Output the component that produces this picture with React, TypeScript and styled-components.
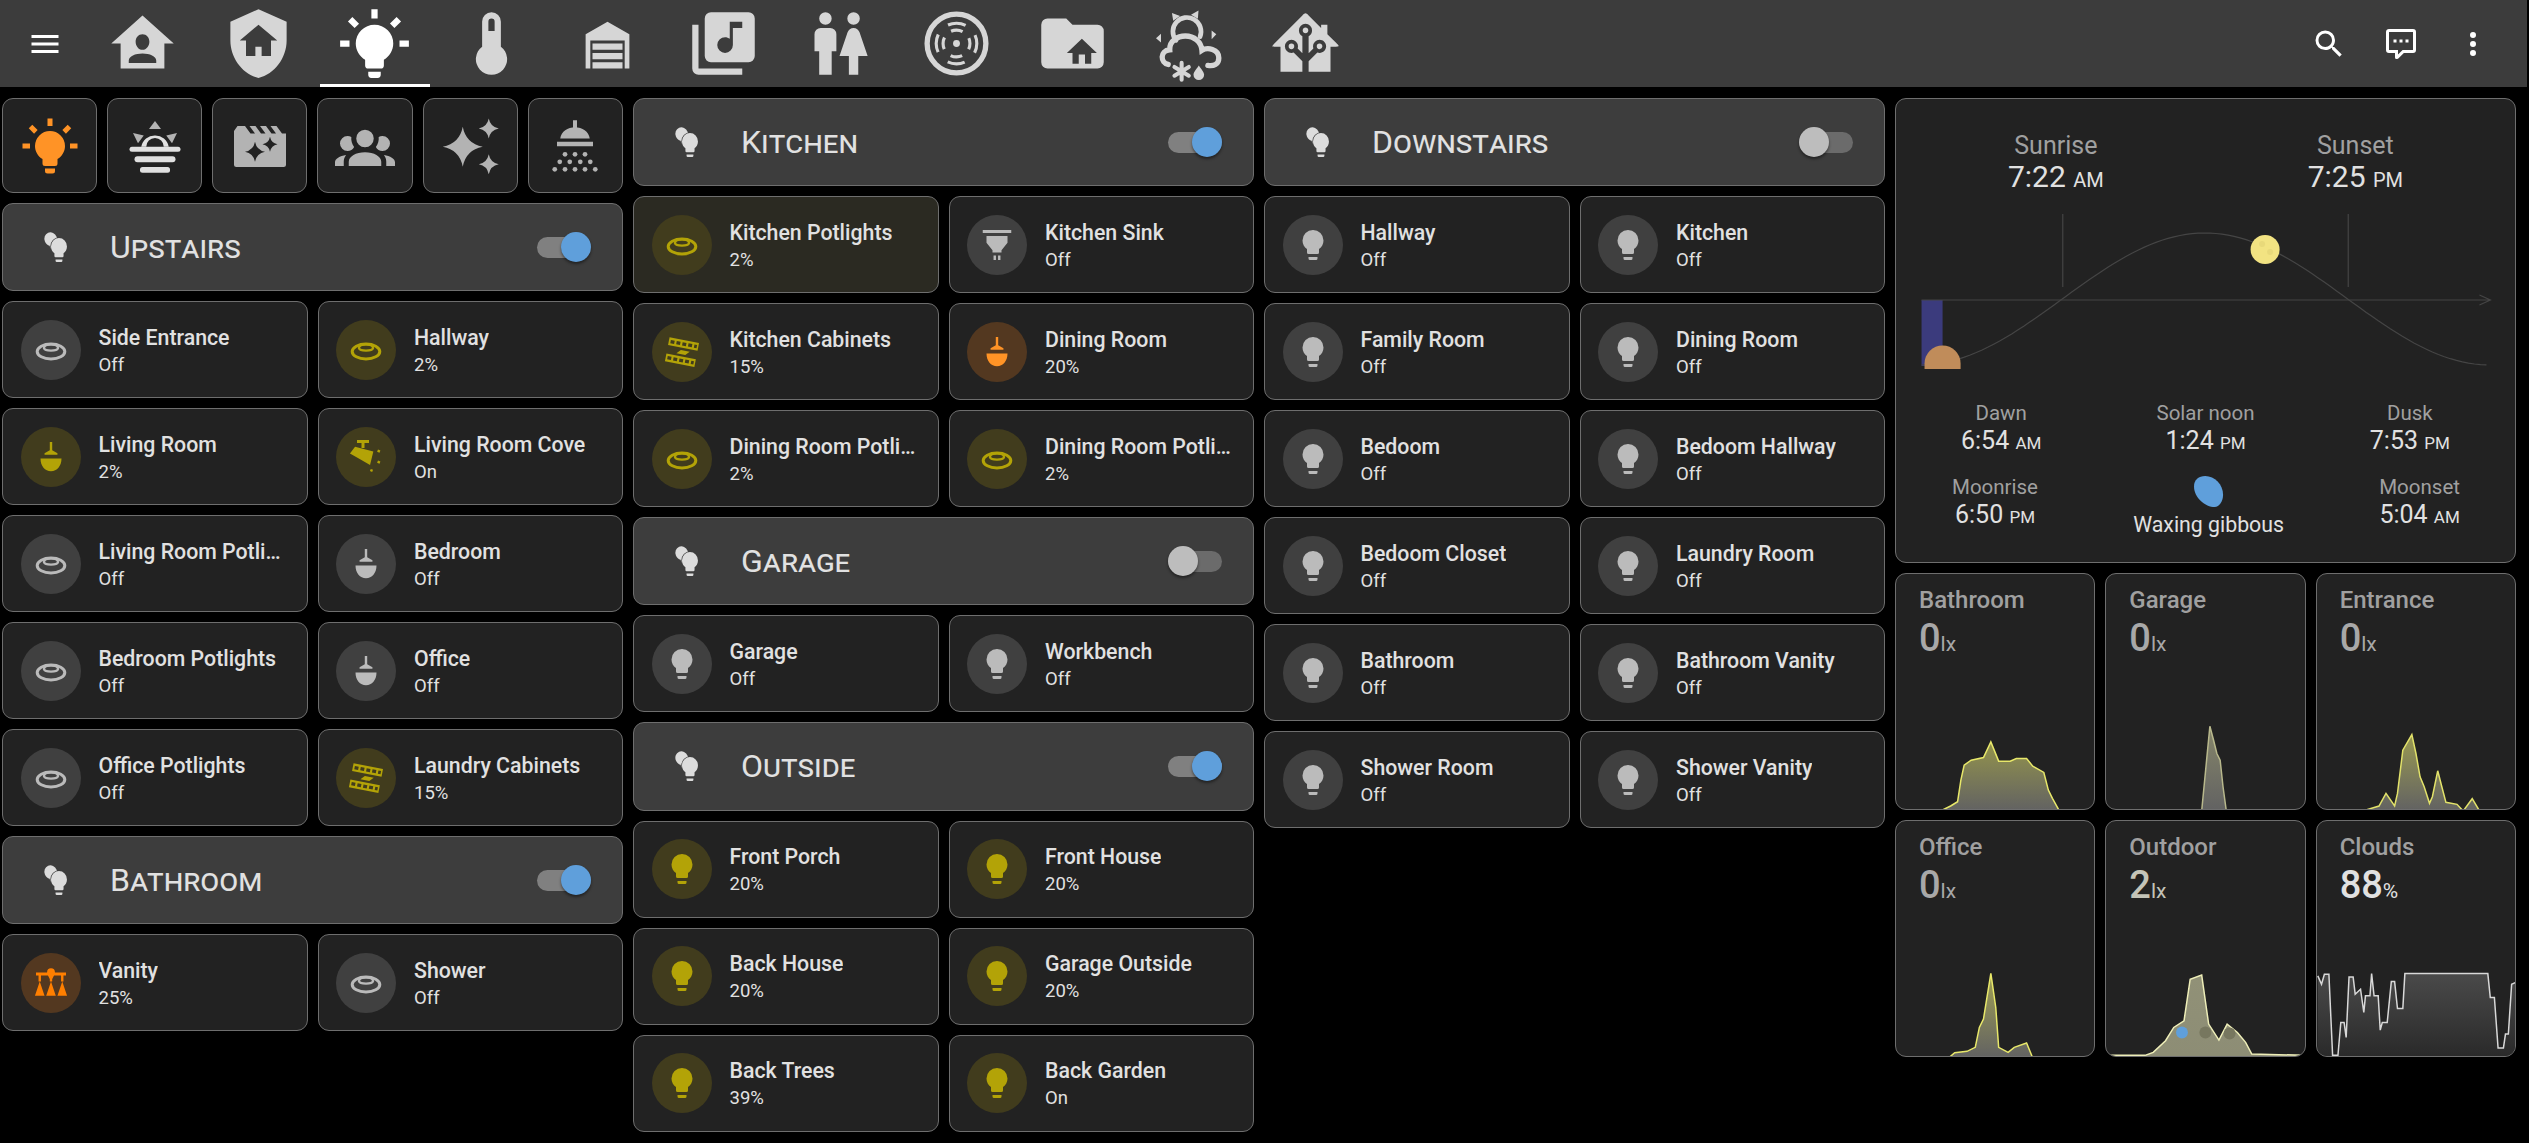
import React from "react";
import styled, { createGlobalStyle } from "styled-components";

const GlobalStyle = createGlobalStyle`
  html, body {
    margin: 0;
    background: #000;
    overflow: hidden;
  }
  * {
    box-sizing: border-box;
  }
  body {
    font-family: Roboto, "Liberation Sans", sans-serif;
    color: #e1e1e1;
  }
`;

const TopBar = styled.header`
  display: flex;
  align-items: center;
  width: calc(100% - 2px);
  height: 87px;
  background: #3c3c3c;
`;

const BarButton = styled.div`
  display: flex;
  align-items: center;
  justify-content: center;
  flex: none;
  width: 72px;
  height: 87px;
`;

const MenuSlot = styled(BarButton)`
  width: 84px;
  padding-left: 6px;
`;

const Tabs = styled.nav`
  display: flex;
  flex: 1;
`;

const Tab = styled.div<{ $active?: boolean }>`
  position: relative;
  display: flex;
  align-items: center;
  justify-content: center;
  width: 116.3px;
  height: 87px;

  &::after {
    content: "";
    display: ${(p) => (p.$active ? "block" : "none")};
    position: absolute;
    left: 3px;
    right: 3px;
    bottom: 0;
    height: 3px;
    background: #fff;
  }
`;

const Actions = styled.div`
  display: flex;
  padding-right: 18px;
`;

const Content = styled.main`
  display: grid;
  grid-template-columns: repeat(4, 621px);
  gap: 10px;
  align-items: start;
  padding: 11px 0 0 2px;
`;

const Column = styled.section`
  display: flex;
  flex-direction: column;
  gap: 10px;
`;

const Card = styled.div`
  background: #222;
  border: 1.5px solid #6e6e6e;
  border-radius: 11px;
`;

const SceneRow = styled.div`
  display: grid;
  grid-template-columns: repeat(6, 1fr);
  gap: 10px;
`;

const SceneButton = styled(Card)`
  display: flex;
  align-items: center;
  justify-content: center;
  height: 95px;
`;

const GroupHeader = styled(Card)`
  display: flex;
  align-items: center;
  height: 88.2px;
  padding: 0 31px 0 35px;
  background: #3d3d3d;
`;

const GroupTitle = styled.h2`
  flex: 1;
  margin: 0 0 0 36px;
  font-size: 32px;
  font-weight: 400;
  font-variant: small-caps;
  color: #e1e1e1;
`;

const Toggle = styled.div<{ $on: boolean }>`
  position: relative;
  width: 54px;
  height: 21px;
  border-radius: 11px;
  background: ${(p) => (p.$on ? "#808080" : "#6b6b6b")};

  &::after {
    content: "";
    position: absolute;
    top: -4.5px;
    ${(p) => (p.$on ? "right: 0;" : "left: 0;")}
    width: 30px;
    height: 30px;
    border-radius: 50%;
    background: ${(p) => (p.$on ? "#5f9fdb" : "#bdbdbd")};
    box-shadow: 0 2px 3px rgba(0, 0, 0, 0.45);
  }
`;

const TileGrid = styled.div`
  display: grid;
  grid-template-columns: 1fr 1fr;
  gap: 10px;
`;

const TileCard = styled(Card)<{ $tinted?: boolean }>`
  display: flex;
  align-items: center;
  gap: 18px;
  min-width: 0;
  height: 97px;
  padding: 0 19px 0 17.5px;
  background: ${(p) => (p.$tinted ? "#2b2a22" : "#222")};
`;

const tones = {
  off: { bg: "#404040", fg: "#bbbbbb" },
  yellow: { bg: "#413c1d", fg: "#b3a307" },
  orange: { bg: "#533820", fg: "#ff9326" },
  amber: { bg: "#533820", fg: "#ff7f00" },
};
type Tone = keyof typeof tones;

const TileCircle = styled.div<{ $tone: Tone }>`
  display: flex;
  align-items: center;
  justify-content: center;
  flex: none;
  width: 60px;
  height: 60px;
  border-radius: 50%;
  background: ${(p) => tones[p.$tone].bg};
  color: ${(p) => tones[p.$tone].fg};
`;

const TileText = styled.div`
  min-width: 0;
  padding-top: 3px;
`;

const TileName = styled.div`
  overflow: hidden;
  font-size: 21.3px;
  font-weight: 500;
  line-height: 27px;
  white-space: nowrap;
  text-overflow: ellipsis;
  color: #e1e1e1;
`;

const TileState = styled.div`
  margin-top: 1px;
  font-size: 18.5px;
  line-height: 27px;
  color: #e1e1e1;
`;

const SunCard = styled(Card)`
  height: 464.5px;
  padding-top: 32px;
`;

const SunTop = styled.div`
  display: flex;
  justify-content: space-around;
  padding: 0 10px;
`;

const TimeBlock = styled.div`
  text-align: center;
`;

const BigLabel = styled.div`
  font-size: 25px;
  line-height: 30px;
  color: #a0a0a0;
`;

const BigValue = styled.div`
  height: 32px;
  font-size: 30px;
  line-height: 32px;
  color: #e1e1e1;

  small {
    font-size: 20px;
    line-height: 1;
  }
`;

const SmallLabel = styled.div`
  font-size: 20.5px;
  line-height: 24px;
  color: #a0a0a0;
`;

const SmallValue = styled.div`
  height: 32px;
  font-size: 25px;
  line-height: 32px;
  color: #e1e1e1;

  small {
    font-size: 17px;
    line-height: 1;
  }
`;

const SunChart = styled.svg`
  display: block;
  width: 100%;
  height: 170px;
  margin-top: 11.5px;
`;

const SunRow = styled.div`
  display: grid;
  grid-template-columns: repeat(3, 1fr);
  margin-top: 26px;
  padding: 0 3px;
`;

const MoonRow = styled.div`
  display: flex;
  justify-content: space-between;
  margin-top: 18px;
  padding: 0 55px 0 56px;
`;

const MoonPhase = styled.div`
  display: flex;
  flex-direction: column;
  align-items: center;
  gap: 4px;
  font-size: 21.3px;
  line-height: 24px;
  color: #e1e1e1;
`;

const SensorGrid = styled.div`
  display: grid;
  grid-template-columns: repeat(3, 1fr);
  gap: 10px;
`;

const SensorCard = styled(Card)`
  display: flex;
  flex-direction: column;
  height: 237px;
  overflow: hidden;
`;

const SensorHead = styled.div`
  padding: 11.5px 0 0 23px;
`;

const SensorName = styled.div`
  font-size: 24px;
  font-weight: 500;
  line-height: 30px;
  color: #a0a0a0;
`;

const SensorValue = styled.div<{ $color: string }>`
  height: 40px;
  margin-top: 3px;
  font-size: 38px;
  font-weight: 500;
  line-height: 40px;
  color: ${(p) => p.$color};

  small {
    font-size: 21px;
    font-weight: 400;
    line-height: 1;
  }
`;

const Spark = styled.svg`
  display: block;
  width: 100%;
  height: 102px;
  margin-top: auto;
`;

const IconSvg = styled.svg<{ $size: number; $color?: string }>`
  display: block;
  flex: none;
  width: ${(p) => p.$size}px;
  height: ${(p) => p.$size}px;
  overflow: visible;
  fill: currentColor;
  color: ${(p) => p.$color ?? "inherit"};
`;

const BULB =
  "M12,2A7,7 0 0,0 5,9C5,11.38 6.19,13.47 8,14.74V17A1,1 0 0,0 9,18H15A1,1 0 0,0 16,17V14.74C17.81,13.47 19,11.38 19,9A7,7 0 0,0 12,2M9,21A1,1 0 0,0 10,22H14A1,1 0 0,0 15,21V20H9V21Z";

// concave four point star, used by the scene icons
const star = (cx: number, cy: number, r: number) => {
  const q = r * 0.16;
  return `M${cx} ${cy - r}Q${cx + q} ${cy - q} ${cx + r} ${cy}Q${cx + q} ${cy + q} ${cx} ${cy + r}Q${cx - q} ${cy + q} ${cx - r} ${cy}Q${cx - q} ${cy - q} ${cx} ${cy - r}Z`;
};

const dots = (y: number, xs: number[]) => xs.map((x) => <circle key={`${x}-${y}`} cx={x} cy={y} r={0.95} />);

const glyphs: Record<string, React.ReactNode> = {
  menu: <path d="M3,6H21V8H3V6M3,11H21V13H3V11M3,16H21V18H3V16Z" />,
  search: (
    <path d="M9.5,3A6.5,6.5 0 0,1 16,9.5C16,11.11 15.41,12.59 14.44,13.73L14.71,14H15.5L20.5,19L19,20.5L14,15.5V14.71L13.73,14.44C12.59,15.41 11.11,16 9.5,16A6.5,6.5 0 0,1 3,9.5A6.5,6.5 0 0,1 9.5,3M9.5,5C7,5 5,7 5,9.5C5,12 7,14 9.5,14C12,14 14,12 14,9.5C14,7 12,5 9.5,5Z" />
  ),
  chat: (
    <path
      fillRule="evenodd"
      d="M4,2H20A2,2 0 0,1 22,4V16A2,2 0 0,1 20,18H13.9L10.2,21.71C10,21.9 9.75,22 9.5,22H9A1,1 0 0,1 8,21V18H4A2,2 0 0,1 2,16V4C2,2.89 2.9,2 4,2M4,4V16H10V19.08L13.08,16H20V4H4M7,9H9V11H7V9M11,9H13V11H11V9M15,9H17V11H15V9Z"
    />
  ),
  more: (
    <path d="M12,16A2,2 0 0,1 14,18A2,2 0 0,1 12,20A2,2 0 0,1 10,18A2,2 0 0,1 12,16M12,10A2,2 0 0,1 14,12A2,2 0 0,1 12,14A2,2 0 0,1 10,12A2,2 0 0,1 12,10M12,4A2,2 0 0,1 14,6A2,2 0 0,1 12,8A2,2 0 0,1 10,6A2,2 0 0,1 12,4Z" />
  ),
  homeAccount: (
    <path
      fillRule="evenodd"
      d="M12 3L2 12h3v8h14v-8h3L12 3zM12 9c1.3 0 2.2 1.1 2.2 2.4S13.3 14 12 14s-2.2-1.3-2.2-2.6S10.700 9 12 9zM12 15.200c2.300 0 4.400 .9 4.400 2.300v.7H7.600v-.7c0-1.400 2.100-2.300 4.400-2.300z"
    />
  ),
  shieldHome: (
    <path d="M11,13H13V16H16V11H18L12,6L6,11H8V16H11V13M12,1L21,5V11C21,16.55 17.16,21.74 12,23C6.84,21.74 3,16.55 3,11V5L12,1Z" />
  ),
  bulbOn: (
    <path d="M12,6A6,6 0 0,1 18,12C18,14.22 16.79,16.16 15,17.2V19A1,1 0 0,1 14,20H10A1,1 0 0,1 9,19V17.2C7.21,16.16 6,14.22 6,12A6,6 0 0,1 12,6M14,21V22A1,1 0 0,1 13,23H11A1,1 0 0,1 10,22V21H14M20,11H23V13H20V11M1,11H4V13H1V11M13,1V4H11V1H13M4.92,3.5L7.05,5.64L5.63,7.05L3.500,4.930L4.920,3.500M16.950,5.630L19.070,3.500L20.500,4.930L18.370,7.050L16.950,5.630Z" />
  ),
  thermometer: (
    <path d="M15 13V5A3 3 0 0 0 9 5V13A5 5 0 1 0 15 13M12 4A1 1 0 0 1 13 5V8H11V5A1 1 0 0 1 12 4Z" fillRule="evenodd" />
  ),
  garage: <path d="M12 5L19 9V20H17.500V11H6.500V20H5V9ZM7.200 12H16.800V14H7.200ZM7.200 15H16.800V17H7.200ZM7.200 18H16.800V20H7.200Z" />,
  music: (
    <path
      fillRule="evenodd"
      d="M4,6H2V20A2,2 0 0,0 4,22H18V20H4V6M18,7H15V12.5A2.5,2.5 0 0,1 12.5,15A2.5,2.5 0 0,1 10,12.5A2.5,2.5 0 0,1 12.5,10C13.07,10 13.58,10.19 14,10.5V5H18V7M20,2H8A2,2 0 0,0 6,4V16A2,2 0 0,0 8,18H20A2,2 0 0,0 22,16V4A2,2 0 0,0 20,2Z"
    />
  ),
  people: (
    <path d="M7.5,2A2,2 0 0,1 9.5,4A2,2 0 0,1 7.5,6A2,2 0 0,1 5.5,4A2,2 0 0,1 7.5,2M6,7H9A2,2 0 0,1 11,9V14.5H9.5V22H5.5V14.5H4V9A2,2 0 0,1 6,7M16.5,2A2,2 0 0,1 18.5,4A2,2 0 0,1 16.5,6A2,2 0 0,1 14.5,4A2,2 0 0,1 16.5,2M15,22V16H12L14.59,8.41C14.84,7.59 15.6,7 16.5,7C17.4,7 18.16,7.59 18.41,8.41L21,16H18V22H15Z" />
  ),
  radar: (
    <g fill="none" stroke="currentColor">
      <circle cx={12} cy={12} r={9.400} strokeWidth={1.700} />
      <circle cx={12} cy={12} r={6.500} strokeWidth={1} strokeDasharray="5.800 4.400" strokeDashoffset={2.900} transform="rotate(90 12 12)" />
      <circle cx={12} cy={12} r={4.300} strokeWidth={1} strokeDasharray="3.800 2.950" strokeDashoffset={1.900} />
      <circle cx={12} cy={12} r={1.100} fill="currentColor" stroke="none" />
    </g>
  ),
  folderHome: (
    <path
      fillRule="evenodd"
      d="M10 4l2 2h8a2 2 0 0 1 2 2v10a2 2 0 0 1-2 2H4a2 2 0 0 1-2-2V6a2 2 0 0 1 2-2h6zM15 10.500L10.200 15H12v3.500h2v-3h2v3h2V15h1.800z"
    />
  ),
  weather: (
    <g>
      <path d="M6.700 2.200l2.600 1-2.200 1.500zM15.200 1.400l-.2 2.700-2.200-1.300zM19.400 7.800l1.500 1.200-1.500 1.600zM1.600 10.300l1.600-1.400v2.800z" />
      <g fill="none" stroke="currentColor" strokeLinecap="round">
        <path d="M8 11a4.500 4.500 0 1 1 7.700-1.200" strokeWidth={1.500} />
        <path
          d="M5.500 18.700C3 18.200 2.700 14.300 6 14C5.800 11.200 8.500 9.600 11 9.600C13.800 9.600 16.100 11.500 16.300 14.200C18 13.100 21.700 13.700 21.700 16.600C21.700 18.700 20 19.300 18.200 19"
          strokeWidth={1.700}
        />
        <path d="M9.800 18.200v5.400M7.500 19.500l4.600 2.800M12.100 19.500l-4.600 2.800" strokeWidth={1.300} />
      </g>
      <path d="M15.300 19c1 1.500 1.700 2.200 1.700 3a1.700 1.700 0 0 1-3.400 0c0-.8.7-1.500 1.700-3z" />
    </g>
  ),
  homeAssistant: (
    <path d="M21.8,13H20V21H13V17.67L15.79,14.88L16.5,15C17.66,15 18.6,14.06 18.6,12.9C18.6,11.74 17.66,10.8 16.5,10.8A2.1,2.1 0 0,0 14.4,12.9L14.5,13.61L13,15.13V9.65C13.66,9.29 14.1,8.6 14.1,7.8A2.1,2.1 0 0,0 12,5.7A2.1,2.1 0 0,0 9.9,7.8C9.9,8.6 10.34,9.29 11,9.65V15.13L9.5,13.61L9.6,12.9A2.1,2.1 0 0,0 7.5,10.8A2.1,2.1 0 0,0 5.4,12.9A2.1,2.1 0 0,0 7.5,15L8.21,14.88L11,17.67V21H4V13H2.25C1.83,13 1.42,13 1.42,12.79C1.43,12.57 1.85,12.15 2.28,11.72L11,3C11.33,2.67 11.67,2.33 12,2.33C12.33,2.33 12.67,2.67 13,3L17,7V6H19V9L21.78,11.78C22.18,12.18 22.59,12.59 22.6,12.8C22.6,13 22.2,13 21.8,13M7.5,12A0.9,0.9 0 0,1 8.4,12.9A0.9,0.9 0 0,1 7.5,13.8A0.9,0.9 0 0,1 6.6,12.9A0.9,0.9 0 0,1 7.5,12M16.5,12C17,12 17.4,12.4 17.4,12.9C17.4,13.4 17,13.8 16.5,13.8A0.9,0.9 0 0,1 15.6,12.9A0.9,0.9 0 0,1 16.5,12M12,6.9C12.5,6.9 12.9,7.3 12.9,7.8C12.9,8.3 12.5,8.7 12,8.7C11.5,8.7 11.1,8.3 11.1,7.8C11.1,7.3 11.5,6.9 12,6.9Z" />
  ),
  horizon: (
    <g>
      <g fill="#b3b3b3">
        <path d="M12 2l2.400 3.200H9.600zM3.200 6.800L7.500 7.800 5.200 10.900zM20.800 6.800L16.500 7.800 18.800 10.900z" />
      </g>
      <path d="M12 7.800a5.500 5.500 0 0 0-5.500 4.500h2a3.500 3.500 0 0 1 7 0h2A5.500 5.500 0 0 0 12 7.800z" fill="#e0e0e0" />
      <g fill="#e0e0e0">
        <rect x={1.8} y={12.300} width={20.400} height={2} rx={1} />
        <rect x={3.800} y={16.100} width={16.400} height={2.400} rx={1.200} />
        <rect x={6} y={20.400} width={12} height={2.300} rx={1} />
      </g>
    </g>
  ),
  movie: (
    <path
      fillRule="evenodd"
      d={`M3 4H22.400V19.400a1 1 0 0 1-1 1H2.600a1 1 0 0 1-1-1V6zM6 4l2.200 3h1.800L7.800 4zM10.200 4l2.200 3h1.800L12 4zM14.400 4l2.200 3h1.800L16.200 4zM18.600 4l2.200 3h1.600V4z${star(10, 14.3, 4)}${star(16, 11.3, 3)}`}
    />
  ),
  group: (
    <path d="M12,5.5A3.5,3.5 0 0,1 15.5,9A3.5,3.5 0 0,1 12,12.5A3.5,3.5 0 0,1 8.5,9A3.5,3.5 0 0,1 12,5.5M5,8C5.56,8 6.08,8.15 6.53,8.42C6.38,9.85 6.8,11.27 7.66,12.38C7.16,13.34 6.16,14 5,14A3,3 0 0,1 2,11A3,3 0 0,1 5,8M19,8A3,3 0 0,1 22,11A3,3 0 0,1 19,14C17.84,14 16.84,13.34 16.34,12.38C17.2,11.27 17.62,9.85 17.47,8.42C17.92,8.15 18.44,8 19,8M5.5,18.25C5.5,16.18 8.41,14.5 12,14.5C15.59,14.5 18.5,16.18 18.5,18.25V20H5.5V18.25M0,20V18.5C0,17.11 1.89,15.94 4.45,15.6C3.86,16.28 3.5,17.22 3.5,18.25V20H0M24,20H20.5V18.25C20.5,17.22 20.14,16.28 19.55,15.6C22.11,15.94 24,17.11 24,18.5V20Z" />
  ),
  sparkles: <path d={`${star(9.1, 12.3, 8)}${star(19.5, 5, 4)}${star(19.5, 19.3, 4)}`} />,
  shower: (
    <g>
      <path d="M11.200 1.700h1.600v3H11.200zM6.100 9c.4-2.800 3-4.500 5.900-4.500s5.500 1.700 5.900 4.500zM4.800 10.300h14.400v1.800H4.800z" />
      {dots(15.3, [8, 12, 16])}
      {dots(18.300, [5.900, 9.900, 14.100, 18.100])}
      {dots(21.300, [3.900, 8, 12, 16, 20.100])}
    </g>
  ),
  bulb: <path d={BULB} />,
  recessed: (
    <g>
      <ellipse cx={12} cy={13} rx={9.200} ry={5} fill="none" stroke="currentColor" strokeWidth={2} />
      <path d="M7.300 10.800C7.300 7.500 16.700 7.500 16.700 10.800C16 13 8 13 7.300 10.800z" fill="none" stroke="currentColor" strokeWidth={1.500} />
    </g>
  ),
  pendant: <path d="M11.200 2h1.600v5.500l3.500 2v1H7.700v-1l3.500-2zM5 13h14c0 5-3 8.500-7 8.500S5 18 5 13z" />,
  cove: (
    <path d="M6 .7H14V2.700H11V6H9V2.700H6zM4.700 5.100L16.900 8.400 14.700 17.300 6.900 12.900 1.300 9.600zM20 7l1.600 .6-.6 1.500-1.600-.6zM20 14.400l1.600 .6-.6 1.500-1.600-.6zM15.200 20l1.500 .5-.6 1.500-1.500-.6z" />
  ),
  strip: (
    <g transform="rotate(11 12 12)">
      <rect x={2} y={4} width={20} height={5.200} />
      <rect x={2} y={15} width={20} height={5.200} />
      <path d="M8.500 13.500L11 10.800H17L14.500 13.500z" />
      <line x1={3.200} x2={21} y1={6.600} y2={6.600} stroke="#413c1d" strokeWidth={2.200} strokeDasharray="2.600 1.400" />
      <line x1={3.200} x2={21} y1={17.600} y2={17.600} stroke="#413c1d" strokeWidth={2.200} strokeDasharray="2.600 1.400" />
    </g>
  ),
  spot: <path d="M2.500 2h19v2H2.500zM5 6h14v4.500l-4 5v1.500H9v-1.500l-4-5zM9.700 19h1.600v3H9.700zM12.700 19h1.600v3h-1.600z" />,
  vanity: (
    <g>
      <circle cx={12} cy={4.800} r={2.600} />
      <path d="M2 5h20v2H2zM3.700 6h1.600v5H3.700zM11.200 6h1.600v5h-1.600zM18.700 6h1.600v5h-1.600zM4.500 11l3.200 9.500H1.300zM12 11l3.200 9.500H8.800zM19.500 11l3.200 9.500h-6.400zM10 7h4l-2 4z" />
    </g>
  ),
  bulbs: (
    <g>
      <g transform="translate(13.500 12) rotate(-22) scale(.9 1) translate(-12 -11)">
        <path d={BULB} />
      </g>
      <g transform="translate(7.300 6.600) scale(1.140 1.200)">
        <path d={BULB} stroke="#3d3d3d" strokeWidth={1.200} paintOrder="stroke" />
      </g>
    </g>
  ),
};

const Icon: React.FC<{ name: string; size: number; color?: string; box?: number }> = ({ name, size, color, box = 24 }) => (
  <IconSvg $size={size} $color={color} viewBox={`0 0 ${box} ${box}`}>
    {glyphs[name]}
  </IconSvg>
);

type TileData = [string, string, string, Tone, boolean?];

interface Group {
  title: string;
  on: boolean;
  tiles: TileData[];
}

const TAB_ICONS = ["homeAccount", "shieldHome", "bulbOn", "thermometer", "garage", "music", "people", "radar", "folderHome", "weather", "homeAssistant"];

const SCENES: [string, string][] = [
  ["bulbOn", "#ff9326"],
  ["horizon", "#e0e0e0"],
  ["movie", "#b3b3b3"],
  ["group", "#b3b3b3"],
  ["sparkles", "#b3b3b3"],
  ["shower", "#b3b3b3"],
];

const upstairs: Group[] = [
  {
    title: "Upstairs",
    on: true,
    tiles: [
      ["Side Entrance", "Off", "recessed", "off"],
      ["Hallway", "2%", "recessed", "yellow"],
      ["Living Room", "2%", "pendant", "yellow"],
      ["Living Room Cove", "On", "cove", "yellow"],
      ["Living Room Potlights", "Off", "recessed", "off"],
      ["Bedroom", "Off", "pendant", "off"],
      ["Bedroom Potlights", "Off", "recessed", "off"],
      ["Office", "Off", "pendant", "off"],
      ["Office Potlights", "Off", "recessed", "off"],
      ["Laundry Cabinets", "15%", "strip", "yellow"],
    ],
  },
  {
    title: "Bathroom",
    on: true,
    tiles: [
      ["Vanity", "25%", "vanity", "amber"],
      ["Shower", "Off", "recessed", "off"],
    ],
  },
];

const middle: Group[] = [
  {
    title: "Kitchen",
    on: true,
    tiles: [
      ["Kitchen Potlights", "2%", "recessed", "yellow", true],
      ["Kitchen Sink", "Off", "spot", "off"],
      ["Kitchen Cabinets", "15%", "strip", "yellow"],
      ["Dining Room", "20%", "pendant", "orange"],
      ["Dining Room Potlights", "2%", "recessed", "yellow"],
      ["Dining Room Potlights", "2%", "recessed", "yellow"],
    ],
  },
  {
    title: "Garage",
    on: false,
    tiles: [
      ["Garage", "Off", "bulb", "off"],
      ["Workbench", "Off", "bulb", "off"],
    ],
  },
  {
    title: "Outside",
    on: true,
    tiles: [
      ["Front Porch", "20%", "bulb", "yellow"],
      ["Front House", "20%", "bulb", "yellow"],
      ["Back House", "20%", "bulb", "yellow"],
      ["Garage Outside", "20%", "bulb", "yellow"],
      ["Back Trees", "39%", "bulb", "yellow"],
      ["Back Garden", "On", "bulb", "yellow"],
    ],
  },
];

const downstairs: Group[] = [
  {
    title: "Downstairs",
    on: false,
    tiles: [
      "Hallway",
      "Kitchen",
      "Family Room",
      "Dining Room",
      "Bedoom",
      "Bedoom Hallway",
      "Bedoom Closet",
      "Laundry Room",
      "Bathroom",
      "Bathroom Vanity",
      "Shower Room",
      "Shower Vanity",
    ].map((name): TileData => [name, "Off", "bulb", "off"]),
  },
];

const GroupBlock: React.FC<{ group: Group }> = ({ group }) => (
  <>
    <GroupHeader>
      <Icon name="bulbs" size={36} box={36} color="#dcdcdc" />
      <GroupTitle>{group.title}</GroupTitle>
      <Toggle $on={group.on} />
    </GroupHeader>
    <TileGrid>
      {group.tiles.map(([name, state, icon, tone, tinted], i) => (
        <TileCard key={`${name}-${i}`} $tinted={tinted}>
          <TileCircle $tone={tone}>
            <Icon name={icon} size={36} />
          </TileCircle>
          <TileText>
            <TileName>{name}</TileName>
            <TileState>{state}</TileState>
          </TileText>
        </TileCard>
      ))}
    </TileGrid>
  </>
);

// sun path across the day, peak at solar noon
const curve = () => {
  const pts: string[] = [];
  for (let x = 1922; x <= 2490; x += 6) {
    pts.push(`${x},${(299 - 66 * Math.cos((Math.PI * (x - 2205)) / 285)).toFixed(1)}`);
  }
  return `M${pts.join("L")}`;
};

const Time: React.FC<{ value: string; unit: string; big?: boolean }> = ({ value, unit, big }) => {
  const Value = big ? BigValue : SmallValue;
  return (
    <Value>
      {value} <small>{unit}</small>
    </Value>
  );
};

const SunPanel: React.FC = () => (
  <SunCard>
    <SunTop>
      <TimeBlock>
        <BigLabel>Sunrise</BigLabel>
        <Time big value="7:22" unit="AM" />
      </TimeBlock>
      <TimeBlock>
        <BigLabel>Sunset</BigLabel>
        <Time big value="7:25" unit="PM" />
      </TimeBlock>
    </SunTop>
    <SunChart viewBox="1896.5 205 618 170" preserveAspectRatio="none">
      <rect x={1922} y={300} width={21} height={66} fill="#3b3b7d" />
      <g fill="none" stroke="#454545" strokeWidth={1.2}>
        <path d={curve()} />
        <path d="M1922 300H2490M2479 295L2490 300L2479 305" />
        <path d="M2063 214V287M2348 214V287" />
      </g>
      <path d="M1925 369v-5.500a18 18 0 0 1 36 0v5.500z" fill="#c08c5a" />
      <circle cx={2265} cy={249.500} r={14.500} fill="#f2e382" />
      <circle cx={2262} cy={244} r={3} fill="#e8d97a" />
      <circle cx={2270} cy={252} r={3} fill="#e8d97a" />
    </SunChart>
    <SunRow>
      <TimeBlock>
        <SmallLabel>Dawn</SmallLabel>
        <Time value="6:54" unit="AM" />
      </TimeBlock>
      <TimeBlock>
        <SmallLabel>Solar noon</SmallLabel>
        <Time value="1:24" unit="PM" />
      </TimeBlock>
      <TimeBlock>
        <SmallLabel>Dusk</SmallLabel>
        <Time value="7:53" unit="PM" />
      </TimeBlock>
    </SunRow>
    <MoonRow>
      <TimeBlock>
        <SmallLabel>Moonrise</SmallLabel>
        <Time value="6:50" unit="PM" />
      </TimeBlock>
      <MoonPhase>
        <svg width={30} height={34} viewBox="0 0 32 34">
          <path d="M12 0C22 0 31 9 31 20C31 27 27 33 22 33C12 33 0 23 0 11C0 4 5 0 12 0Z" fill="#5f9fdb" />
        </svg>
        <span>Waxing gibbous</span>
      </MoonPhase>
      <TimeBlock>
        <SmallLabel>Moonset</SmallLabel>
        <Time value="5:04" unit="AM" />
      </TimeBlock>
    </MoonRow>
  </SunCard>
);

interface SensorData {
  name: string;
  value: string;
  unit: string;
  valueColor: string;
  baseX: number;
  baseY: number;
  stroke: string;
  top: string;
  bottom: string;
  points: number[][];
  marks?: boolean;
  flatHidden?: boolean;
}

const SENSORS: SensorData[] = [
  {
    name: "Bathroom", value: "0", unit: "lx", valueColor: "#a8a8a8", baseX: 37, baseY: 440,
    stroke: "#e8e86a", top: "#94944c", bottom: "#626262", flatHidden: true,
    points: [[37,745],[145,745],[170,738],[187,725],[195,660],[203,615],[220,600],[250,592],[268,545],[287,603],[315,603],[330,595],[355,595],[370,618],[397,637],[408,690],[418,715],[435,745],[520,745]],
  },
  {
    name: "Garage", value: "0", unit: "lx", valueColor: "#a8a8a8", baseX: 545, baseY: 440,
    stroke: "#b8b88c", top: "#86866a", bottom: "#626262", flatHidden: true,
    points: [[545,745],[778,745],[790,600],[798,498],[807,540],[815,580],[823,600],[830,680],[838,745],[1030,745]],
  },
  {
    name: "Entrance", value: "0", unit: "lx", valueColor: "#a8a8a8", baseX: 1054, baseY: 440,
    stroke: "#e2e26a", top: "#9a9a52", bottom: "#626262", flatHidden: true,
    points: [[1054,745],[1165,745],[1205,738],[1222,700],[1243,738],[1250,700],[1263,570],[1285,523],[1295,580],[1305,650],[1315,680],[1328,730],[1335,710],[1348,632],[1358,680],[1368,727],[1395,733],[1410,745],[1432,716],[1450,745],[1537,745]],
  },
  {
    name: "Office", value: "0", unit: "lx", valueColor: "#a8a8a8", baseX: 37, baseY: 1179,
    stroke: "#e8e86a", top: "#a0a054", bottom: "#626262", flatHidden: true,
    points: [[37,1484],[165,1484],[180,1476],[210,1472],[230,1460],[240,1400],[250,1375],[268,1237],[280,1340],[287,1460],[310,1475],[325,1460],[355,1447],[370,1484],[520,1484]],
  },
  {
    name: "Outdoor", value: "2", unit: "lx", valueColor: "#c4c4b8", baseX: 545, baseY: 1179,
    stroke: "#eeeeb8", top: "#919177", bottom: "#8d8d75", marks: true,
    points: [[545,1484],[640,1484],[660,1475],[690,1440],[710,1400],[735,1380],[750,1255],[778,1242],[795,1390],[820,1438],[840,1390],[865,1415],[885,1445],[900,1480],[1030,1484]],
  },
  {
    name: "Clouds", value: "88", unit: "%", valueColor: "#e1e1e1", baseX: 1054, baseY: 1179,
    stroke: "#d8d8d8", top: "#4a4a4a", bottom: "#2a2a2a",
    points: [[1056,1245],[1065,1270],[1072,1240],[1083,1240],[1092,1484],[1105,1484],[1112,1385],[1120,1385],[1125,1430],[1132,1248],[1142,1248],[1147,1300],[1160,1285],[1168,1355],[1172,1305],[1183,1305],[1187,1238],[1193,1305],[1203,1305],[1208,1408],[1213,1385],[1225,1385],[1235,1262],[1243,1262],[1250,1343],[1263,1343],[1268,1238],[1470,1238],[1476,1310],[1486,1310],[1495,1462],[1508,1462],[1513,1420],[1520,1420],[1528,1270],[1537,1265]],
  },
];

const SensorTile: React.FC<{ data: SensorData }> = ({ data }) => {
  const bottom = data.baseY + 307;
  // a zero reading sits on the card edge, so push it out of view
  const pts = data.points.map(([x, y]) => [x, data.flatHidden && y >= bottom - 2 ? bottom + 6 : y]);
  const line = pts.map((p) => p.join(",")).join(" ");
  const last = pts[pts.length - 1][0];
  const gradId = `grad-${data.name}`;
  return (
    <SensorCard>
      <SensorHead>
        <SensorName>{data.name}</SensorName>
        <SensorValue $color={data.valueColor}>
          {data.value}
          <small>{data.unit}</small>
        </SensorValue>
      </SensorHead>
      <Spark viewBox={`${data.baseX} ${data.baseY} 483 307`} preserveAspectRatio="none">
        <defs>
          <linearGradient id={gradId} x1="0" y1="0" x2="0" y2="1">
            <stop offset="0" stopColor={data.top} />
            <stop offset="1" stopColor={data.bottom} />
          </linearGradient>
        </defs>
        <polygon points={`${pts[0][0]},${bottom} ${line} ${last},${bottom}`} fill={`url(#${gradId})`} />
        <polyline points={line} fill="none" stroke={data.stroke} strokeWidth={1.5} vectorEffect="non-scaling-stroke" />
        {data.marks && (
          <>
            <ellipse cx={730} cy={1415} rx={14.500} ry={18} fill="#5f9fdb" />
            <ellipse cx={787} cy={1415} rx={14.500} ry={18} fill="#77775f" />
            <ellipse cx={846} cy={1418} rx={14.500} ry={18} fill="#77775f" />
          </>
        )}
      </Spark>
    </SensorCard>
  );
};

const App: React.FC = () => (
  <>
    <GlobalStyle />
    <TopBar>
      <MenuSlot>
        <Icon name="menu" size={36} color="#fff" />
      </MenuSlot>
      <Tabs>
        {TAB_ICONS.map((name, i) => (
          <Tab key={name} $active={i === 2}>
            <Icon name={name} size={75} color={i === 2 ? "#fff" : "#d6d6d6"} />
          </Tab>
        ))}
      </Tabs>
      <Actions>
        <BarButton>
          <Icon name="search" size={36} color="#fff" />
        </BarButton>
        <BarButton>
          <Icon name="chat" size={36} color="#fff" />
        </BarButton>
        <BarButton>
          <Icon name="more" size={36} color="#fff" />
        </BarButton>
      </Actions>
    </TopBar>
    <Content>
      <Column>
        <SceneRow>
          {SCENES.map(([name, color]) => (
            <SceneButton key={name}>
              <Icon name={name} size={60} color={color} />
            </SceneButton>
          ))}
        </SceneRow>
        {upstairs.map((g) => (
          <GroupBlock key={g.title} group={g} />
        ))}
      </Column>
      <Column>
        {middle.map((g) => (
          <GroupBlock key={g.title} group={g} />
        ))}
      </Column>
      <Column>
        {downstairs.map((g) => (
          <GroupBlock key={g.title} group={g} />
        ))}
      </Column>
      <Column>
        <SunPanel />
        <SensorGrid>
          {SENSORS.map((s) => (
            <SensorTile key={s.name} data={s} />
          ))}
        </SensorGrid>
      </Column>
    </Content>
  </>
);

export default App;
